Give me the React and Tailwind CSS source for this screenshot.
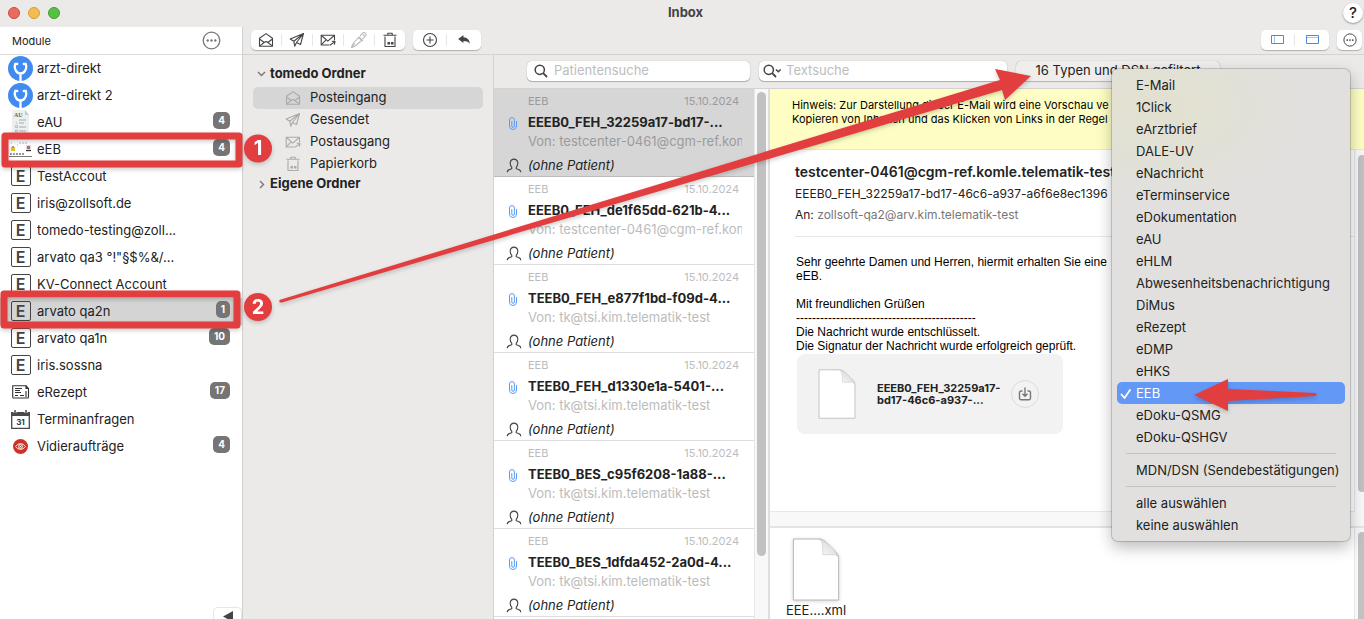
import { useState } from "react";

const modules = [
  { name: "arzt-direkt", icon: "steth" },
  { name: "arzt-direkt 2", icon: "steth" },
  { name: "eAU", icon: "au", count: 4 },
  { name: "eEB", icon: "eeb", count: 4 },
  { name: "TestAccout", icon: "e" },
  { name: "iris@zollsoft.de", icon: "e" },
  { name: "tomedo-testing@zoll...", icon: "e" },
  { name: 'arvato qa3 °!"§$%&/...', icon: "e" },
  { name: "KV-Connect Account", icon: "e" },
  { name: "arvato qa2n", icon: "e", count: 1 },
  { name: "arvato qa1n", icon: "e", count: 10 },
  { name: "iris.sossna", icon: "e" },
  { name: "eRezept", icon: "rezept", count: 17 },
  { name: "Terminanfragen", icon: "calendar" },
  { name: "Vidieraufträge", icon: "eye", count: 4 },
];

const folders = [
  { name: "Posteingang", Icon: InboxIcon },
  { name: "Gesendet", Icon: SendIcon },
  { name: "Postausgang", Icon: OutboxIcon },
  { name: "Papierkorb", Icon: TrashIcon },
];

const mails = [
  { subject: "EEEB0_FEH_32259a17-bd17-...", from: "testcenter-0461@cgm-ref.kom" },
  { subject: "EEEB0_FEH_de1f65dd-621b-4...", from: "testcenter-0461@cgm-ref.kom" },
  { subject: "TEEB0_FEH_e877f1bd-f09d-4...", from: "tk@tsi.kim.telematik-test" },
  { subject: "TEEB0_FEH_d1330e1a-5401-...", from: "tk@tsi.kim.telematik-test" },
  { subject: "TEEB0_BES_c95f6208-1a88-...", from: "tk@tsi.kim.telematik-test" },
  { subject: "TEEB0_BES_1dfda452-2a0d-4...", from: "tk@tsi.kim.telematik-test" },
];

const types = [
  "E-Mail",
  "1Click",
  "eArztbrief",
  "DALE-UV",
  "eNachricht",
  "eTerminservice",
  "eDokumentation",
  "eAU",
  "eHLM",
  "Abwesenheitsbenachrichtigung",
  "DiMus",
  "eRezept",
  "eDMP",
  "eHKS",
  "EEB",
  "eDoku-QSMG",
  "eDoku-QSHGV",
];

function Svg({ size = 16, className = "", children }) {
  return (
    <svg
      width={size}
      height={size}
      viewBox="0 0 16 16"
      fill="none"
      stroke="currentColor"
      strokeWidth="1.1"
      strokeLinejoin="round"
      className={`shrink-0 ${className}`}
      aria-hidden="true"
    >
      {children}
    </svg>
  );
}

function InboxIcon(props) {
  return (
    <Svg {...props}>
      <path d="M1.500 6.300 8 1.600l6.500 4.700v7.900h-13z" />
      <path d="m1.800 7.200 4.400 3.300M14.200 7.200l-4.400 3.300M1.800 13.900l4.600-3.600c1-.8 2.200-.8 3.200 0l4.600 3.600" />
    </Svg>
  );
}

function SendIcon(props) {
  return (
    <Svg {...props}>
      <path d="M14.500 1.500 1.200 7l3.600 2.200zM14.500 1.500l-3 11-4-2zM4.800 9.200l.9 5 1.800-3.700" />
    </Svg>
  );
}

function OutboxIcon(props) {
  return (
    <Svg {...props}>
      <path d="M9.500 13H1.200V3.200h13.300v5" />
      <path d="m1.500 3.500 6.300 5.700 6.400-5.700M1.500 12.700l4.300-4.500M10 13.200l4.800-3.600M11.800 9.200l3.200.2-.6 3.200" />
    </Svg>
  );
}

function PenIcon(props) {
  return (
    <Svg {...props}>
      <path d="m0 16 2.500-5 5.500-6 3 3-6 5.500zM0 16l4-4.500M7 5.500l5 3.500M9 4l3-3.200c1.200-1.200 4 1.400 2.800 2.700L11.500 7M12 2.500l1.500 1.500" />
    </Svg>
  );
}

function TrashIcon(props) {
  return (
    <Svg {...props}>
      <path d="M3 4.500v10h10v-10M1.500 3.300h13M5.800 3V1.300h4.400V3" />
      <path d="M6 10.500h1.500V12H6zM9.500 10.500H11V12H9.500z" fill="currentColor" />
    </Svg>
  );
}

function PlusCircleIcon(props) {
  return (
    <Svg {...props}>
      <circle cx="8" cy="8" r="6.500" />
      <path d="M8 4.500v7M4.500 8h7" />
    </Svg>
  );
}

function ReplyIcon(props) {
  return (
    <Svg {...props}>
      <path
        d="M2.200 7 7.400 3v2.300c4 .3 6.200 2.700 6.400 6.500C12.300 9.600 10.400 8.900 7.400 8.900v2.200z"
        fill="currentColor"
        stroke="none"
      />
    </Svg>
  );
}

function DotsIcon(props) {
  return (
    <Svg {...props}>
      <circle cx="8" cy="8" r="7" />
      <g fill="currentColor" stroke="none">
        <circle cx="4.800" cy="8" r="1" />
        <circle cx="8" cy="8" r="1" />
        <circle cx="11.200" cy="8" r="1" />
      </g>
    </Svg>
  );
}

function SearchIcon({ menu }) {
  return (
    <svg width="20" height="16" viewBox="0 0 20 16" fill="none" stroke="#444" strokeWidth="1.500" className="shrink-0" aria-hidden="true">
      <circle cx="6.800" cy="6.800" r="4.600" />
      <path d="m10.200 10.200 3.800 3.800" strokeWidth="1.800" />
      {menu && <path d="m14 6.500 2.300 2.300 2.300-2.300" />}
    </svg>
  );
}

function PersonIcon() {
  return (
    <Svg size={16} className="text-[#444]">
      <path d="M1.200 14.300c.2-2.400 1.500-2.700 4.600-3.500V9.300C3.300 6.500 3.600 1.100 8 1.100s4.700 5.400 2.200 8.200v1.500c3.100.8 4.400 1.100 4.600 3.500" />
    </Svg>
  );
}

function ClipIcon() {
  return (
    <svg width="8" height="13" viewBox="0 0 8 13" fill="none" stroke="#5b9bf3" aria-hidden="true">
      <path d="M7.500 4v5a3.500 3.500 0 0 1-7 0V3a2.400 2.400 0 0 1 4.900 0v6a1.300 1.300 0 0 1-2.600 0V4" />
    </svg>
  );
}

function FileIcon({ className }) {
  return (
    <svg viewBox="0 0 48 64" className={className} aria-hidden="true">
      <defs>
        <linearGradient id="fold" x1="0" y1="1" x2="1" y2="0">
          <stop offset="0" stopColor="#fff" />
          <stop offset="1" stopColor="#ccc" />
        </linearGradient>
      </defs>
      <path d="M1 1h26c4 0 6 2 9 5l8 8c3 3 3 5 3 8v41H1z" fill="#fff" stroke="#b5b5b5" />
      <path d="M27 1c3 1 4 5 4 16h12c2 0 3 1 4 3C44 12 36 4 27 1z" fill="url(#fold)" stroke="#c4c4c4" strokeWidth=".6" />
    </svg>
  );
}

function ModuleIcon({ type }) {
  if (type === "steth")
    return (
      <svg width="25" height="25" viewBox="0 0 25 25" fill="none" aria-hidden="true">
        <circle cx="12.500" cy="12.500" r="12.500" fill="#3f8bf0" />
        <path
          d="M9.300 8H7.200c-.8 2.500-.4 5 .8 6.800 1.200 1.900 2.700 2.700 4.500 2.700s3.300-.8 4.500-2.700c1.200-1.800 1.600-4.300.8-6.800h-2.100M12.500 18v7"
          stroke="#fff"
          strokeWidth="2.300"
          strokeLinecap="round"
        />
      </svg>
    );
  if (type === "au")
    return (
      <svg width="19" height="25" viewBox="0 0 19 25" aria-hidden="true">
        <path d="M1 0h13l4 5v20H1z" fill="#ecefef" />
        <path d="m14 0 4 5h-4z" fill="#c3cbcb" />
        <text x="3" y="7" fontSize="6" fontWeight="600" fill="#666" fontFamily="Liberation Serif, serif">AU</text>
        <path d="M8 10h7M5 13h1M8 13h5M8 17h7M8 21h7" stroke="#a5abab" />
        <path d="M4.500 15.500h2v2h-2zM4.500 20h2v2h-2z" fill="none" stroke="#a5abab" strokeWidth=".7" />
      </svg>
    );
  if (type === "eeb")
    return (
      <svg width="23" height="15" viewBox="0 0 23 15" aria-hidden="true">
        <path fill="#fff" d="M0 0h23v15H0z" />
        <path d="M2 1h1M10 1h8M8 3h1" stroke="#999" strokeWidth=".7" strokeDasharray="2 1" />
        <path d="M2 5h4v4H2z" fill="#e5c01c" />
        <path d="M3 4h2v2H3z" fill="#999" />
        <path d="M17 3h5v7h-5z" fill="#d9dcec" />
        <path d="M18 4h3v3h-3z" fill="#b56a5b" />
        <path d="M17 8.500h5" stroke="#333" />
        <path d="M1 12h15" stroke="#333" strokeDasharray="2 1" />
        <path d="M0 14.500h23" stroke="#777" />
      </svg>
    );
  if (type === "rezept")
    return (
      <svg width="18" height="14" viewBox="0 0 18 14" fill="none" stroke="#333" aria-hidden="true">
        <path d="M14 .7H.7v11.500c0 .5.300.8.800.8h14c.6 0 1-.4 1-1V3.500H14V.7l2.500 2.800M14 6v6" strokeWidth="1.100" />
        <path d="M3 3.500h7M3 5.500h5M3 7.500h6M3 10.500h3M8 10.500h4" />
      </svg>
    );
  if (type === "calendar")
    return (
      <svg width="19" height="19" viewBox="0 0 19 19" aria-hidden="true">
        <path d="M.7 3.500h17.600v14.800H.7z" fill="#fff" stroke="#4a4a4a" strokeWidth="1.300" />
        <path d="M0 2h19v4H0z" fill="#4a4a4a" />
        <path d="M4 0v3M15 0v3" stroke="#fff" strokeWidth="3" />
        <path d="M4 0v3M15 0v3" stroke="#4a4a4a" strokeWidth="1.500" />
        <text x="9.500" y="15" textAnchor="middle" fontSize="8" fontWeight="700" fill="#333">31</text>
      </svg>
    );
  if (type === "eye")
    return (
      <svg width="15" height="15" viewBox="0 0 16 16" fill="none" stroke="#fff" aria-hidden="true">
        <circle cx="8" cy="8" r="8" fill="#cb3329" stroke="none" />
        <path d="M2.800 8c2.800-4 7.600-4 10.400 0-2.800 4-7.600 4-10.400 0z" />
        <circle cx="8" cy="8" r="2" />
        <circle cx="8" cy="8" r=".7" fill="#fff" stroke="none" />
      </svg>
    );
  return (
    <span className="flex h-5 w-5 items-center justify-center rounded-xs border border-[#444] pb-px text-base leading-4 font-semibold text-[#444]">
      E
    </span>
  );
}

function ToolbarGroup({ children }) {
  return (
    <div className="flex h-5 items-center divide-x divide-gray-200 rounded-[5px] bg-white shadow-[0_1px_1px_rgba(0,0,0,0.25)]">
      {children}
    </div>
  );
}

function ToolbarButton({ label, className = "w-[31px]", children }) {
  return (
    <button type="button" aria-label={label} className={`flex h-3 items-center justify-center text-[#444] ${className}`}>
      {children}
    </button>
  );
}

function Sidebar({ active, onSelect }) {
  return (
    <aside className="flex w-[243px] shrink-0 flex-col border-r border-[#d0d0d0] bg-white">
      <div className="flex h-7 shrink-0 items-center justify-between border-b border-[#dcdcdc] pr-[21px] pl-3">
        <h2 className="pt-px text-[11px]">Module</h2>
        <button type="button" aria-label="Module bearbeiten" className="text-[#777]">
          <DotsIcon size={19} />
        </button>
      </div>
      <nav>
        {modules.map((m) => (
          <button
            key={m.name}
            type="button"
            onClick={() => onSelect(m.name)}
            className={`flex h-[27px] w-full items-center pr-3 pb-px pl-2 text-left ${active === m.name ? "bg-[#d4d4d4]" : ""}`}
          >
            <span className="flex w-[25px] shrink-0 justify-center">
              <ModuleIcon type={m.icon} />
            </span>
            <span className="ml-1 flex-1 truncate pt-px">{m.name}</span>
            {m.count && (
              <span className="mt-[3px] self-start rounded-[5px] bg-[#757575] px-[5px] text-[10px] leading-[17px] font-bold text-white">
                {m.count}
              </span>
            )}
          </button>
        ))}
      </nav>
      <button
        type="button"
        aria-label="Seitenleiste einklappen"
        className="mt-auto flex h-3 w-[29px] justify-center self-end overflow-hidden rounded-t-[5px] border border-b-0 border-gray-200 pt-[3px]"
      >
        <svg width="10" height="11" viewBox="0 0 10 11" className="shrink-0" aria-hidden="true">
          <path d="M10 0v11L0 5.500z" fill="#444" />
        </svg>
      </button>
    </aside>
  );
}

function FolderTree() {
  return (
    <nav className="w-[251px] shrink-0 border-r border-[#d4d3d2] px-[10px] pt-[9px]">
      <button type="button" className="flex h-[23px] w-full items-center gap-1 pb-1 pl-1 font-bold">
        <svg width="9" height="9" viewBox="0 0 9 9" fill="none" stroke="#777" strokeWidth="1.400" aria-hidden="true">
          <path d="m1 3 3.500 3.500L8 3" />
        </svg>
        tomedo Ordner
      </button>
      {folders.map(({ name, Icon }, i) => (
        <button
          key={name}
          type="button"
          className={`flex h-[22px] w-full items-center gap-[9px] rounded-[5px] pl-8 ${i === 0 ? "bg-[#d6d6d6]" : ""}`}
        >
          <Icon size={16} className="text-[#aaa]" />
          {name}
        </button>
      ))}
      <button type="button" className="flex h-[22px] w-full items-center gap-1 pb-1 pl-1 font-bold">
        <svg width="9" height="9" viewBox="0 0 9 9" fill="none" stroke="#777" strokeWidth="1.400" aria-hidden="true">
          <path d="M3 1l3.500 3.500L3 8" />
        </svg>
        Eigene Ordner
      </button>
    </nav>
  );
}

function MailList() {
  return (
    <div className="flex w-[276px] shrink-0 overflow-hidden border-r-2 border-[#dedede] bg-white">
      <ul className="w-[261px] shrink-0 border-r border-gray-200">
        {mails.map((m, i) => (
          <li
            key={m.subject}
            className={`h-[88px] border-b pt-1 ${i === 0 ? "border-[#bbb] bg-[#d6d6d6]" : "border-[#dedede] bg-white"}`}
          >
            <div
              className={`flex justify-between pr-[15px] pl-[34px] text-[11px] leading-4 ${i === 0 ? "text-[#9b9b9b]" : "text-[#bcbcbc]"}`}
            >
              <span>EEB</span>
              <span>15.10.2024</span>
            </div>
            <div className="mt-1 flex h-5 items-center">
              <span className="flex w-[34px] shrink-0 justify-center pl-1">
                <ClipIcon />
              </span>
              <span className="font-bold whitespace-nowrap">{m.subject}</span>
            </div>
            <div
              className={`mr-3 ml-[34px] h-4 overflow-hidden text-[13px] leading-4 whitespace-nowrap ${i === 0 ? "text-[#9b9b9b]" : "text-[#bcbcbc]"}`}
            >
              Von: {m.from}
            </div>
            <div className="mt-[7px] flex h-5 items-center gap-[6px] pl-3">
              <PersonIcon />
              <span className="text-[13px] italic">(ohne Patient)</span>
            </div>
          </li>
        ))}
      </ul>
      <div className="flex-1 bg-[#f8f8f8] px-[2px] pt-[3px]">
        <div className="h-[464px] rounded-full bg-[#c1c1c1]" />
      </div>
    </div>
  );
}

function Preview() {
  return (
    <section className="flex min-w-0 flex-1 flex-col bg-white">
      <div className="h-[61px] shrink-0 border-b border-gray-200 bg-[#fefec4] pt-[9px] pl-[22px] text-[11px] leading-[14px] whitespace-nowrap text-black">
        <p>Hinweis: Zur Darstellung dieser E-Mail wird eine Vorschau ve</p>
        <p>Kopieren von Inhalten und das Klicken von Links in der Regel</p>
      </div>
      <div className="flex h-[362px] shrink-0">
        <article className="min-w-0 flex-1 overflow-hidden border-r border-b border-gray-200 pt-3 pl-[25px] whitespace-nowrap">
          <h1 className="text-[14px] leading-5 font-semibold">
            testcenter-0461@cgm-ref.komle.telematik-test
          </h1>
          <p className="mt-[3px] text-[12px] leading-[18px]">
            EEEB0_FEH_32259a17-bd17-46c6-a937-a6f6e8ec1396
          </p>
          <p className="mt-[3px] text-[12px] leading-[18px]">
            An: <span className="text-[#777]">zollsoft-qa2@arv.kim.telematik-test</span>
          </p>
          <div className="mt-3 border-t border-gray-200" />
          <div className="mt-[18px] pl-px font-[family-name:'Liberation_Sans',Arial,sans-serif] text-[12px] leading-[14px] text-black">
            <p>Sehr geehrte Damen und Herren, hiermit erhalten Sie eine</p>
            <p>eEB.</p>
            <br />
            <p>Mit freundlichen Grüßen</p>
            <p>---------------------------------------------</p>
            <p>Die Nachricht wurde entschlüsselt.</p>
            <p>Die Signatur der Nachricht wurde erfolgreich geprüft.</p>
          </div>
          <div className="mt-px ml-[2px] flex h-20 w-[266px] items-center rounded-lg bg-[#f2f2f2] pl-[21px]">
            <FileIcon className="h-[50px] w-[38px] shrink-0" />
            <p className="ml-[21px] w-[124px] text-[11px] leading-3 font-bold">
              EEEB0_FEH_32259a17-
              <br />
              bd17-46c6-a937-...
            </p>
            <button
              type="button"
              aria-label="Anhang speichern"
              className="ml-[10px] flex h-7 w-7 shrink-0 items-center justify-center rounded-full border border-[#dcdcdc] text-[#777]"
            >
              <svg width="14" height="14" viewBox="0 0 14 14" fill="none" stroke="currentColor" strokeWidth="1.400" aria-hidden="true">
                <path d="M4.500 4H3a1.500 1.500 0 0 0-1.500 1.500v5.700A1.500 1.500 0 0 0 3 12.700h8a1.500 1.500 0 0 0 1.500-1.500V5.500A1.500 1.500 0 0 0 11 4H9.500M7 .5v8.500M4.500 6.700 7 9.200l2.500-2.500" />
              </svg>
            </button>
          </div>
        </article>
        <div className="w-[9px] shrink-0 overflow-hidden bg-[#f8f8f8] pt-[5px] pl-[3px]">
          <div className="h-[337px] w-2 rounded-full bg-[#c1c1c1]" />
        </div>
      </div>
      <div className="h-4 shrink-0 border-b-2 border-[#e4e4e4] bg-[#f8f8f8]" />
      <div className="flex min-h-0 flex-1">
        <div className="flex-1 border-r border-gray-200 pt-[10px] pl-[13px]">
          <figure className="flex w-[66px] flex-col items-center">
            <FileIcon className="h-[63px] w-12 drop-shadow-sm" />
            <figcaption className="pt-px text-[13px] leading-4">EEE....xml</figcaption>
          </figure>
        </div>
        <div className="w-[9px] shrink-0 overflow-hidden bg-[#f8f8f8] pt-1 pl-[3px]">
          <div className="h-32 w-2 rounded-full bg-[#c1c1c1]" />
        </div>
      </div>
    </section>
  );
}

function TypeMenu({ selected, onSelect }) {
  const item = "flex h-[22px] w-full items-center rounded-[5px] pt-px pl-[3px] text-left whitespace-nowrap";

  return (
    <div
      role="menu"
      className="absolute top-[69px] right-[14px] z-10 w-[238px] rounded-md bg-[#e1e0de] bg-[radial-gradient(150px_100px_at_20%_8%,#e2e1cf,#e1e0de)] p-[5px] shadow-[0_0_0_1px_rgba(0,0,0,0.16),0_6px_16px_rgba(0,0,0,0.28)]"
    >
      {types.map((t) => (
        <button
          key={t}
          type="button"
          role="menuitemcheckbox"
          aria-checked={selected === t}
          onClick={() => onSelect(t)}
          className={`${item} ${selected === t ? "bg-[#6498f7] text-white" : ""}`}
        >
          <span className="w-4 shrink-0">
            {selected === t && (
              <svg width="12" height="12" viewBox="0 0 12 12" fill="none" stroke="currentColor" strokeWidth="1.800" aria-hidden="true">
                <path d="m1.500 6.500 3 3.500L10 2" strokeLinecap="round" strokeLinejoin="round" />
              </svg>
            )}
          </span>
          {t}
        </button>
      ))}
      <hr className="mx-[9px] my-[5px] border-[#c4c3c2]" />
      <button type="button" role="menuitem" className={item}>
        <span className="pl-4">MDN/DSN (Sendebestätigungen)</span>
      </button>
      <hr className="mx-[9px] my-[5px] border-[#c4c3c2]" />
      <button type="button" role="menuitem" onClick={() => onSelect("")} className={item}>
        <span className="pl-4">alle auswählen</span>
      </button>
      <button type="button" role="menuitem" onClick={() => onSelect("")} className={item}>
        <span className="pl-4">keine auswählen</span>
      </button>
    </div>
  );
}

// numbered steps, frames and arrows drawn over the window
function Annotations() {
  return (
    <svg className="pointer-events-none absolute inset-0 z-20 h-full w-full drop-shadow-[0_2px_2px_rgba(0,0,0,0.2)]" aria-hidden="true">
      <g fill="none" stroke="#e33e3f" strokeWidth="7" strokeLinejoin="round">
        <rect x="5" y="136" width="234" height="28" />
        <rect x="4" y="294" width="233" height="31" />
      </g>
      <g fill="#e33e3f">
        <circle cx="258" cy="148.500" r="14" />
        <circle cx="258" cy="307" r="14" />
        <path d="M281 299.500 1000 80l-5-11 36 7-26 24-3-10L282 302.500c-3 .5-4-2-1-3z" />
        <path d="m1194 395 34-16v10l87 4c2 0 2 3 0 3l-87 5v10z" />
      </g>
      <g fill="#fff" fontSize="20" fontWeight="700" textAnchor="middle">
        <text x="258" y="155">1</text>
        <text x="258" y="314">2</text>
      </g>
    </svg>
  );
}

export default function App() {
  const [active, setActive] = useState("arvato qa2n");
  const [type, setType] = useState("EEB");
  const [patient, setPatient] = useState("");
  const [text, setText] = useState("");

  return (
    <div className="relative flex h-screen flex-col overflow-hidden bg-[#ebeae8] font-[family-name:Inter,sans-serif] text-[13px] text-[#222]">
      {/* title bar */}
      <header className="flex h-[27px] shrink-0 items-center pr-px pb-px pl-2">
        <div className="flex flex-1 gap-2">
          <button type="button" aria-label="Schließen" className="h-3 w-3 rounded-full border border-[#d0493f] bg-[#ed6a5e]" />
          <button type="button" aria-label="Minimieren" className="h-3 w-3 rounded-full border border-[#d69e35] bg-[#f4bd4f]" />
          <button type="button" aria-label="Maximieren" className="h-3 w-3 rounded-full border border-[#3f9f2f] bg-[#55c140]" />
        </div>
        <h1 className="font-bold text-[#444]">Inbox</h1>
        <div className="flex flex-1 justify-end">
          <button
            type="button"
            aria-label="Hilfe"
            className="h-5 w-5 rounded-full bg-white text-[15px] leading-5 font-medium shadow-[0_1px_2px_rgba(0,0,0,0.35)]"
          >
            ?
          </button>
        </div>
      </header>

      <div className="flex min-h-0 flex-1">
        <Sidebar active={active} onSelect={setActive} />

        <div className="flex min-w-0 flex-1 flex-col">
          {/* toolbar */}
          <div className="flex h-7 shrink-0 items-center gap-2 border-b border-[#d4d3d2] pr-[2px] pb-[2px] pl-2">
            <ToolbarGroup>
              <ToolbarButton label="Posteingang"><InboxIcon /></ToolbarButton>
              <ToolbarButton label="Senden"><SendIcon /></ToolbarButton>
              <ToolbarButton label="Postausgang"><OutboxIcon /></ToolbarButton>
              <ToolbarButton label="Signieren"><PenIcon className="text-[#bbb]" /></ToolbarButton>
              <ToolbarButton label="Löschen" className="w-[30px]"><TrashIcon /></ToolbarButton>
            </ToolbarGroup>
            <ToolbarGroup>
              <ToolbarButton label="Neu" className="w-[34px]"><PlusCircleIcon /></ToolbarButton>
              <ToolbarButton label="Antworten" className="w-[34px]"><ReplyIcon /></ToolbarButton>
            </ToolbarGroup>
            <div className="ml-auto">
              <ToolbarGroup>
                <ToolbarButton label="Spaltenansicht" className="w-[34px]">
                  <svg width="13" height="9" viewBox="0 0 13 9" fill="none" stroke="#4a8bcb" aria-hidden="true">
                    <path d="M.5.500h12v8H.5z" />
                    <path d="M3.500 1v7" strokeOpacity=".5" />
                  </svg>
                </ToolbarButton>
                <ToolbarButton label="Zeilenansicht" className="w-[34px]">
                  <svg width="13" height="9" viewBox="0 0 13 9" fill="none" stroke="#4a8bcb" aria-hidden="true">
                    <path d="M.5.500h12v8H.5z" />
                    <path d="M1 2.500h11" strokeOpacity=".5" />
                  </svg>
                </ToolbarButton>
              </ToolbarGroup>
            </div>
            <ToolbarGroup>
              <ToolbarButton label="Mehr" className="w-[25px]"><DotsIcon size={14} /></ToolbarButton>
            </ToolbarGroup>
          </div>

          <div className="flex min-h-0 flex-1">
            <FolderTree />

            <div className="flex min-w-0 flex-1 flex-col">
              {/* search row */}
              <div className="flex h-[34px] shrink-0 items-center gap-[9px] border-b border-[#d4d3d2] pb-px pl-[33px]">
                <label className="flex h-5 w-[223px] items-center rounded-[5px] bg-white pl-[6px] shadow-[0_0_1px_rgba(0,0,0,0.3),0_1px_1px_rgba(0,0,0,0.25)]">
                  <SearchIcon />
                  <input
                    type="text"
                    aria-label="Patientensuche"
                    value={patient}
                    onChange={(e) => setPatient(e.target.value)}
                    placeholder="Patientensuche"
                    className="ml-px w-full bg-transparent outline-none placeholder:text-[#bdbdbd]"
                  />
                </label>
                <label className="flex h-5 w-[248px] items-center rounded-[5px] bg-white pl-[3px] shadow-[0_0_1px_rgba(0,0,0,0.3),0_1px_1px_rgba(0,0,0,0.25)]">
                  <SearchIcon menu />
                  <input
                    type="text"
                    aria-label="Textsuche"
                    value={text}
                    onChange={(e) => setText(e.target.value)}
                    placeholder="Textsuche"
                    className="ml-1 w-full bg-transparent outline-none placeholder:text-[#bdbdbd]"
                  />
                </label>
                <button
                  type="button"
                  aria-haspopup="menu"
                  className="h-5 w-[204px] rounded-[5px] bg-[#efeeed] whitespace-nowrap shadow-[0_0_1px_rgba(0,0,0,0.35),0_1px_1px_rgba(0,0,0,0.2)]"
                >
                  16 Typen und DSN gefiltert
                </button>
              </div>
              <div className="flex min-h-0 flex-1">
                <MailList />
                <Preview />
              </div>
            </div>
          </div>
        </div>
      </div>

      <TypeMenu selected={type} onSelect={setType} />
      <Annotations />
    </div>
  );
}
